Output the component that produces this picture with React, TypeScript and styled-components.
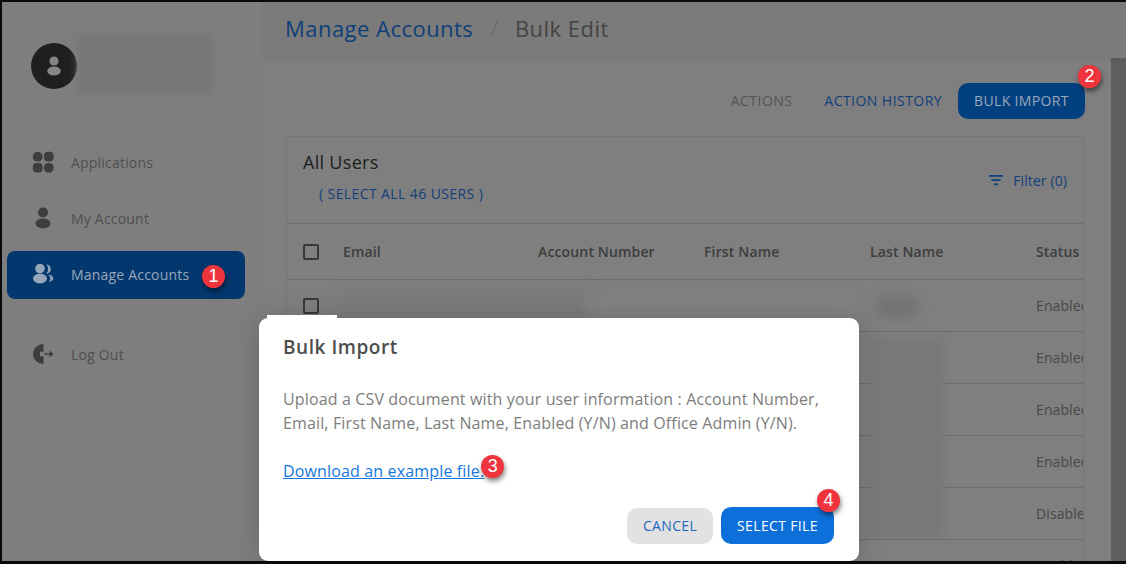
import React from "react";
import styled, { createGlobalStyle } from "styled-components";

const Global = createGlobalStyle`
  html, body { margin: 0; padding: 0; background: #000; }
  * { box-sizing: border-box; }
  body { font-family: "Open Sans", "Liberation Sans", sans-serif; }
`;

const Frame = styled.div`
  position: relative;
  width: 1126px;
  height: 564px;
  overflow: hidden;
  display: flex;
  background: #7f7f7f;
  border-top: 2px solid #0a0a0a;
  border-left: 2px solid #0a0a0a;
  border-bottom: 3px solid #0a0a0a;
`;

const Sidebar = styled.aside`
  width: 260px;
  flex: none;
  padding: 41px 17px 0 5px;
  display: flex;
  flex-direction: column;
  background: #7e7e7f;
`;

const Profile = styled.div`
  position: relative;
  height: 46px;
  padding-left: 24px;
  margin-bottom: 49px;
`;

const Avatar = styled.div`
  width: 46px;
  height: 46px;
  border-radius: 50%;
  background: #1f1f1f;
  display: flex;
  align-items: center;
  justify-content: center;
`;

const BlurPatch = styled.div<{ $l: number; $t: number; $w: number; $h: number; $c?: string; $b?: number }>`
  position: absolute;
  left: ${(p) => p.$l}px;
  top: ${(p) => p.$t}px;
  width: ${(p) => p.$w}px;
  height: ${(p) => p.$h}px;
  background: ${(p) => p.$c ?? "#747474"};
  filter: blur(${(p) => p.$b ?? 5}px);
`;

const NavItem = styled.div<{ $active?: boolean; $gapAfter?: number }>`
  position: relative;
  height: 48px;
  margin-top: ${(p) => (p.$active ? 1 : 0)}px;
  margin-bottom: ${(p) => p.$gapAfter ?? 8}px;
  padding: 0 0 ${(p) => (p.$active ? 2 : 0)}px 25px;
  display: flex;
  align-items: center;
  border-radius: 8px;
  background: ${(p) => (p.$active ? "#03386f" : "transparent")};
  color: ${(p) => (p.$active ? "#97a6b8" : "#4f4f50")};
  font-size: 14px;
  letter-spacing: 0.2px;
`;

const NavIcon = styled.span`
  width: 22px;
  height: 22px;
  margin-right: 17px;
  flex: none;
  display: flex;
  align-items: center;
  justify-content: center;
`;

const Badge = styled.span<{ $r: number; $t: number }>`
  position: absolute;
  right: ${(p) => p.$r}px;
  top: ${(p) => p.$t}px;
  width: 23px;
  height: 23px;
  border-radius: 50%;
  background: #f0343e;
  color: #fff;
  font-family: "Liberation Sans", Arial, sans-serif;
  font-size: 18px;
  line-height: 23px;
  text-align: center;
  display: inline-block;
  letter-spacing: 0;
  box-shadow: 1px 3px 5px rgba(0, 0, 0, 0.5);
`;

const Main = styled.main`
  flex: 1;
  min-width: 0;
  display: flex;
  flex-direction: column;
`;

const Header = styled.header`
  position: relative;
  height: 56px;
  flex: none;
  padding: 0 0 5px 23px;
  display: flex;
  align-items: center;
  font-size: 22px;
  letter-spacing: 0.47px;
  background: #7b7b7b;
  box-shadow: 0 4px 5px -2px rgba(0, 0, 0, 0.05);
  color: #444;
`;

const Crumb = styled.span`
  color: #0f3f78;
`;

const Sep = styled.span`
  color: #6e6e6e;
  margin: 0 16px 0 17px;
`;

const Body = styled.div`
  flex: 1;
  min-height: 0;
  display: flex;
`;

const Content = styled.div`
  flex: 1;
  min-width: 0;
  padding: 25px 27px 0 24px;
  overflow: hidden;
`;

const ScrollTrack = styled.div`
  width: 15px;
  flex: none;
  background: #5f5f5f;
`;

const Tabs = styled.div`
  height: 36px;
  margin-right: -1px;
  display: flex;
  align-items: center;
  justify-content: flex-end;
  font-size: 14px;
  letter-spacing: 0.45px;
`;

const TabLabel = styled.span<{ $muted?: boolean }>`
  color: ${(p) => (p.$muted ? "#555555" : "#12407a")};
  margin: 0 ${(p) => (p.$muted ? 32 : 16)}px 2px 0;
`;

const TabButton = styled.div`
  position: relative;
  width: 127px;
  height: 36px;
  padding-bottom: 1px;
  border-radius: 10px;
  background: #03407f;
  color: #97a9bd;
  letter-spacing: 0.35px;
  display: flex;
  align-items: center;
  justify-content: center;
`;

const Card = styled.section`
  position: relative;
  margin-top: 17px;
  height: 440px;
  border: 1px solid #767676;
  border-bottom: 0;
  border-radius: 4px 4px 0 0;
  overflow: hidden;
`;

const CardTop = styled.div`
  height: 87px;
  padding: 13px 16px 0;
  display: flex;
  justify-content: space-between;
  border-bottom: 1px solid #6c6c6c;
`;

const CardTitle = styled.div`
  font-size: 18px;
  line-height: 24px;
  letter-spacing: 0.3px;
  color: #1d1d1d;
`;

const SelectAll = styled.div`
  margin: 11px 0 0 16px;
  font-size: 14px;
  line-height: 18px;
  letter-spacing: 0.4px;
  color: #12407a;
`;

const FilterBox = styled.div`
  margin: 20px 0 0 0;
  display: flex;
  align-items: center;
  gap: 9px;
  font-size: 14px;
  letter-spacing: 0.1px;
  color: #12407a;
  height: 20px;
`;

const Row = styled.div<{ $h: number; $head?: boolean }>`
  height: ${(p) => p.$h}px;
  padding-left: 16px;
  display: grid;
  grid-template-columns: 40px 195px 166px 166px 166px 80px;
  align-items: center;
  border-bottom: 1px solid #6c6c6c;
  font-size: 14px;
  letter-spacing: ${(p) => (p.$head ? 0.15 : 0.1)}px;
  font-weight: ${(p) => (p.$head ? 600 : 400)};
  color: ${(p) => (p.$head ? "#3d3d3d" : "#494949")};
  white-space: nowrap;
`;

const Check = styled.span`
  width: 16px;
  height: 16px;
  border: 2px solid #383838;
  border-radius: 2px;
`;

const Backdrop = styled.div`
  position: absolute;
  inset: 0;
  display: flex;
  pointer-events: none;
`;

const Modal = styled.div`
  position: absolute;
  left: 257px;
  top: 316px;
  width: 600px;
  height: 243px;
  background: #fff;
  border-radius: 9px;
  padding: 16px 24px 0;
  box-shadow: 0 0 28px rgba(0, 0, 0, 0.18);
`;

const Notch = styled.div`
  position: absolute;
  left: 8px;
  top: -3px;
  width: 70px;
  height: 4px;
  background: #fff;
`;

const ModalTitle = styled.h2`
  margin: 0;
  font-size: 19px;
  line-height: 26px;
  font-weight: 600;
  color: #4d4d4d;
  letter-spacing: 0.55px;
`;

const ModalText = styled.p`
  margin: 27px 0 0;
  font-size: 16px;
  line-height: 24px;
  letter-spacing: 0.14px;
  color: #7d7d7d;
`;

const LinkLine = styled.div`
  margin-top: 24px;
  font-size: 16px;
  line-height: 24px;
  letter-spacing: 0.15px;
`;

const DownloadLink = styled.a`
  position: relative;
  color: #1677dd;
  text-decoration: underline;
`;

const ModalActions = styled.div`
  position: absolute;
  right: 25px;
  bottom: 17px;
  display: flex;
  gap: 8px;
  font-size: 14px;
  letter-spacing: 0.35px;
`;

const CancelButton = styled.div`
  width: 86px;
  height: 36px;
  padding-bottom: 2px;
  border-radius: 10px;
  background: #e2e2e2;
  color: #1e67c0;
  display: flex;
  align-items: center;
  justify-content: center;
`;

const SelectButton = styled.div`
  position: relative;
  width: 113px;
  height: 37px;
  margin-top: -1px;
  border-radius: 10px;
  background: #0d6fd9;
  color: #fff;
  display: flex;
  align-items: center;
  justify-content: center;
`;

const Person = ({ c, s = 22 }: { c: string; s?: number }) => (
  <svg width={s} height={s} viewBox="0 0 22 22">
    <circle cx="11" cy="5.5" r="5" fill={c} />
    <ellipse cx="11" cy="16.5" rx="7.5" ry="5" fill={c} />
  </svg>
);

const AppsIcon = () => (
  <svg width="22" height="22" viewBox="0 0 22 22" fill="#3d3d3e">
    <circle cx="5.7" cy="5.7" r="4.9" />
    <rect x="12" y="0.8" width="9.6" height="9.8" rx="4" />
    <rect x="0.8" y="12" width="9.8" height="9.6" rx="4" />
    <circle cx="16.8" cy="16.8" r="4.9" />
  </svg>
);

const UsersIcon = () => (
  <svg width="22" height="22" viewBox="0 0 22 22" fill="#97a6b8">
    <circle cx="8" cy="5.6" r="4.8" />
    <ellipse cx="8" cy="15.6" rx="7" ry="4.8" />
    <path d="M14.4 1.6a4.6 4.6 0 0 1 2.3 8.4 4.4 4.4 0 0 1-2.6.6 6.4 6.4 0 0 0 .3-9z" />
    <path d="M16 11.4c3 .3 5.3 2 5.3 4 0 1.300-1.500 2.800-4.500 3.500 .9-1 1.500-2 1.500-3.300 0-1.700-.8-3.100-2.300-4.200z" />
  </svg>
);

const LogoutIcon = () => (
  <svg width="22" height="22" viewBox="0 0 22 22" fill="#3d3d3e">
    <path d="M11.500 1v7.800H8v4.400h3.500V21A10.200 10.200 0 0 1 1 11 10.200 10.200 0 0 1 11.500 1z" />
    <path d="M12.500 10.300h5.200V7.600l3.800 3.400-3.800 3.400v-2.700h-5.200z" />
  </svg>
);

const FilterIcon = () => (
  <svg width="16" height="12" viewBox="0 0 16 12" fill="#12407a">
    <rect x="1" y="1" width="14" height="1.8" />
    <rect x="3.400" y="5.200" width="9.200" height="1.800" />
    <rect x="6" y="9.400" width="4" height="1.800" />
  </svg>
);

const rows = ["Enabled", "Enabled", "Enabled", "Enabled", "Disabled", "Enabled"];
const columns = ["Email", "Account Number", "First Name", "Last Name", "Status"];

export default function App() {
  return (
    <Frame>
      <Global />
      <Sidebar>
        <Profile>
          <Avatar>
            <Person c="#858585" s={20} />
          </Avatar>
          <BlurPatch $l={71} $t={-8} $w={135} $h={60} $c="#777778" $b={4} />
        </Profile>
        <NavItem>
          <NavIcon><AppsIcon /></NavIcon>Applications
        </NavItem>
        <NavItem>
          <NavIcon><Person c="#3d3d3e" /></NavIcon>My Account
        </NavItem>
        <NavItem $active $gapAfter={31}>
          <NavIcon><UsersIcon /></NavIcon>Manage Accounts
          <Badge $r={20} $t={14}>1</Badge>
        </NavItem>
        <NavItem>
          <NavIcon><LogoutIcon /></NavIcon>Log Out
        </NavItem>
      </Sidebar>
      <Main>
        <Header>
          <Crumb>Manage Accounts</Crumb>
          <Sep>/</Sep>
          <span>Bulk Edit</span>
        </Header>
        <Body>
          <Content>
            <Tabs>
              <TabLabel $muted>ACTIONS</TabLabel>
              <TabLabel>ACTION HISTORY</TabLabel>
              <TabButton>
                BULK IMPORT
                <Badge $r={-16} $t={-18}>2</Badge>
              </TabButton>
            </Tabs>
            <Card>
              <CardTop>
                <div>
                  <CardTitle>All Users</CardTitle>
                  <SelectAll>( SELECT ALL 46 USERS )</SelectAll>
                </div>
                <FilterBox>
                  <FilterIcon />
                  Filter (0)
                </FilterBox>
              </CardTop>
              <Row $h={56} $head>
                <Check />
                {columns.map((c) => (
                  <span key={c}>{c}</span>
                ))}
              </Row>
              {rows.map((s, i) => (
                <Row $h={52} key={i}>
                  <Check />
                  <span />
                  <span />
                  <span />
                  <span />
                  <span>{s}</span>
                </Row>
              ))}
              <BlurPatch $l={50} $t={153} $w={250} $h={26} $c="#7b7b7b" $b={6} />
              <BlurPatch $l={300} $t={160} $w={270} $h={24} $c="#838383" $b={6} />
              <BlurPatch $l={590} $t={160} $w={40} $h={20} $c="#727272" $b={6} />
              <BlurPatch $l={582} $t={200} $w={75} $h={200} $c="#797979" $b={3} />
            </Card>
          </Content>
          <ScrollTrack />
        </Body>
      </Main>
      <Backdrop>
        <Modal>
          <Notch />
          <ModalTitle>Bulk Import</ModalTitle>
          <ModalText>
            Upload a CSV document with your user information : Account Number,
            <br />
            Email, First Name, Last Name, Enabled (Y/N) and Office Admin (Y/N).
          </ModalText>
          <LinkLine>
            <DownloadLink>
              Download an example file.
              <Badge $r={-20} $t={-5}>3</Badge>
            </DownloadLink>
          </LinkLine>
          <ModalActions>
            <CancelButton>CANCEL</CancelButton>
            <SelectButton>
              SELECT FILE
              <Badge $r={-6} $t={-18}>4</Badge>
            </SelectButton>
          </ModalActions>
        </Modal>
      </Backdrop>
    </Frame>
  );
}
